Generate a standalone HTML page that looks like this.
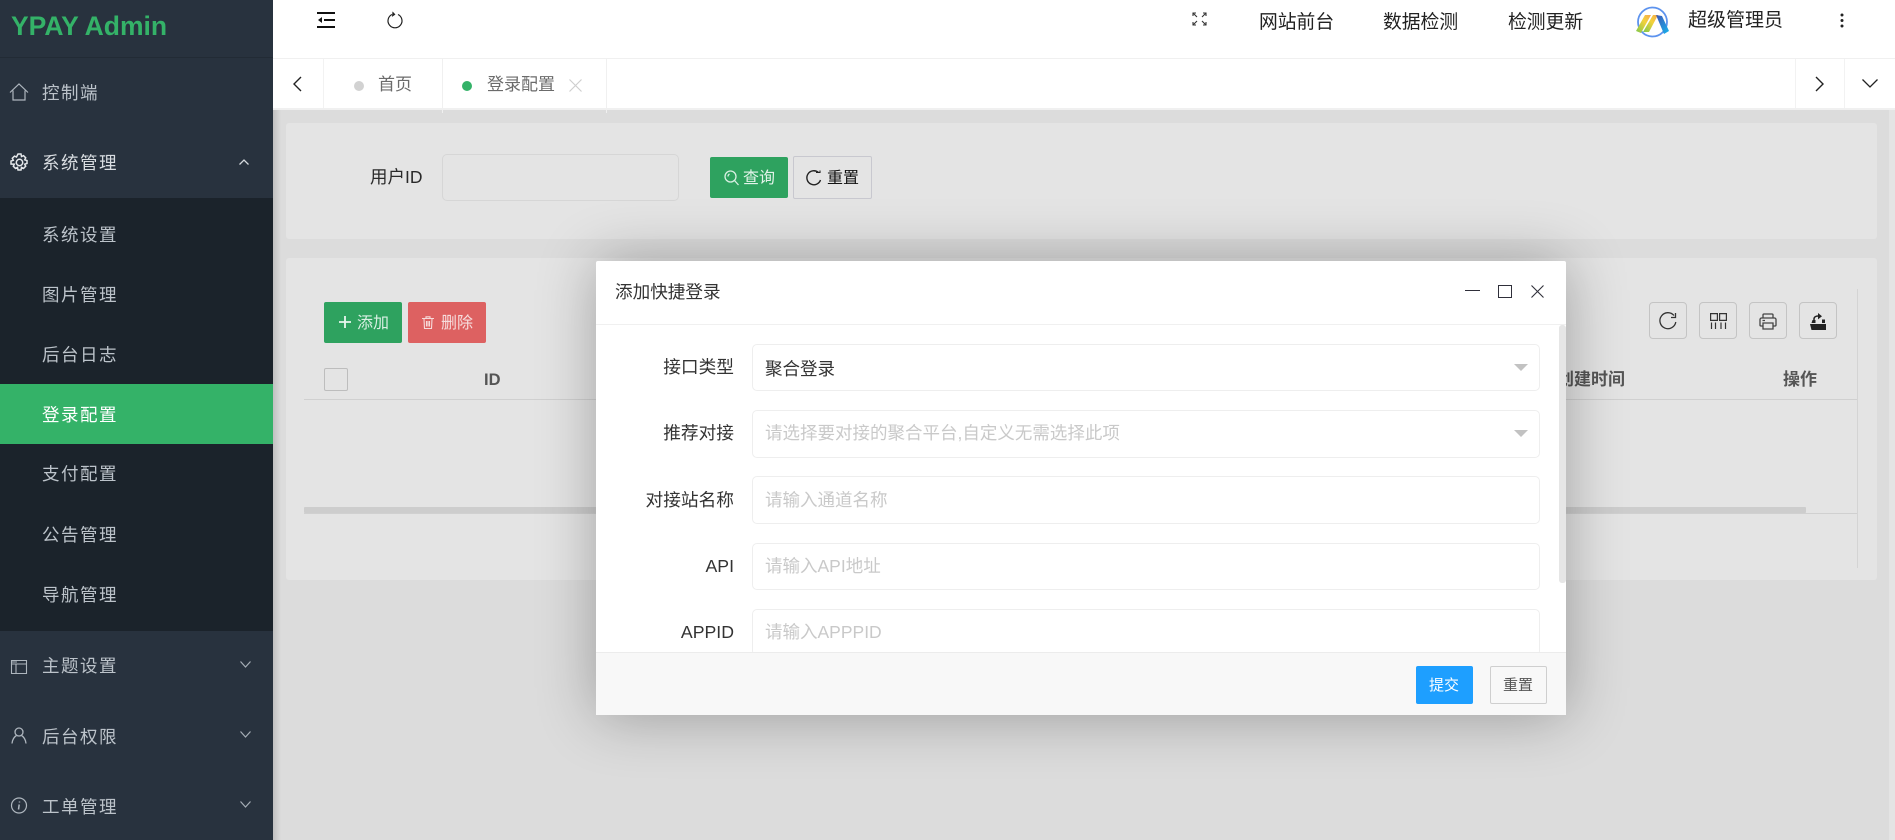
<!DOCTYPE html>
<html lang="zh-CN"><head><meta charset="utf-8"><title>YPAY Admin</title>
<style>
*{box-sizing:border-box;margin:0;padding:0}
html,body{width:1895px;height:840px;overflow:hidden;background:#dcdcdc;font-family:"Liberation Sans","Noto Sans CJK SC",sans-serif}
.a{position:absolute}
.t{position:absolute;white-space:nowrap;line-height:24px;height:24px}
svg{position:absolute;overflow:visible;fill:none}
.m{color:#bcc3ca;font-size:17.5px;letter-spacing:1.5px;left:42px}
.h{color:#222;font-size:18.8px}
.l{color:#333;font-size:17.7px;right:1161px;text-align:right}
.p{color:#c9c9c9;font-size:17.5px;left:765px}
.i{position:absolute;left:752px;width:788px;background:#fff;border:1px solid #eee;border-radius:5px}
.b{position:absolute;border-radius:2px}
.th{color:#555;font-size:17px;font-weight:700}
.tb{position:absolute;width:38px;height:37px;top:302px;border:1px solid #c4c4c4;border-radius:4px}
.car{position:absolute;left:1514px;width:0;height:0;border-left:7px solid transparent;border-right:7px solid transparent;border-top:7px solid #c2c2c2}
</style></head><body>

<!-- main bg -->
<div class="a" style="left:273px;top:110px;width:1622px;height:730px;background:#dcdcdc"></div>
<div class="a" style="left:1889px;top:110px;width:6px;height:730px;background:#e4e4e4"></div>
<div class="a" style="left:286px;top:123px;width:1591px;height:116px;background:#e4e4e4;border-radius:3px"></div>
<div class="a" style="left:286px;top:258px;width:1591px;height:322px;background:#e4e4e4;border-radius:3px"></div>

<div class="t" style="left:370px;top:165px;color:#2a2a2a;font-size:17.5px">用户ID</div>
<div class="a" style="left:442px;top:154px;width:237px;height:47px;border:1px solid #d6d6d6;border-radius:5px"></div>
<div class="b" style="left:710px;top:157px;width:78px;height:41px;background:#2ea25f"></div>
<svg style="left:723px;top:169px" width="18" height="18" viewBox="0 0 18 18" stroke="#d8efe2" stroke-width="1.3"><circle cx="7.5" cy="7.5" r="5.5"/><path d="M11.5 11.5l4 4.5M5 7.5a3 3 0 0 1 1.5-2.6"/></svg>
<div class="t" style="left:743px;top:167px;color:#e3f3ea;font-size:16px">查询</div>
<div class="b" style="left:793px;top:156px;width:79px;height:43px;border:1px solid #c8c8cf"></div>
<svg style="left:806px;top:169px" width="16" height="18" viewBox="0 0 16 18" stroke="#222" stroke-width="1.4"><path d="M12.500 3.500A7 7 0 1 0 14.500 11"/><path d="M10 3.500h4v-2" stroke-width="1.100"/></svg>
<div class="t" style="left:827px;top:167px;color:#111;font-size:16px">重置</div>

<div class="b" style="left:324px;top:302px;width:78px;height:41px;background:#2ea25f"></div>
<svg style="left:338px;top:315px" width="14" height="14" viewBox="0 0 14 14" stroke="#e8f6ee" stroke-width="1.800"><path d="M7 1v12M1 7h12"/></svg>
<div class="t" style="left:357px;top:312px;color:#d9efe3;font-size:16px">添加</div>
<div class="b" style="left:408px;top:302px;width:78px;height:41px;background:#dd6161"></div>
<svg style="left:422px;top:316px" width="12" height="13" viewBox="0 0 12 13" stroke="#f6dada" stroke-width="1.100"><path d="M0 2.500h12M4 2V.8h4V2M2 3l.5 9.500h7L10 3M4.500 5v5.500M6 5v5.500M7.500 5v5.500"/></svg>
<div class="t" style="left:441px;top:312px;color:#f6dddd;font-size:16px">删除</div>

<div class="a" style="left:324px;top:368px;width:24px;height:23px;border:1px solid #bdbdbd;border-radius:2px"></div>
<div class="t th" style="left:484px;top:368px;font-size:16.5px">ID</div>
<div class="t th" style="left:1557px;top:368px">创建时间</div>
<div class="t th" style="left:1783px;top:368px">操作</div>
<div class="a" style="left:304px;top:399px;width:1553px;height:1px;background:#d0d0d0"></div>
<div class="a" style="left:1857px;top:289px;width:1px;height:279px;background:#d4d4d4"></div>
<div class="a" style="left:304px;top:513px;width:1553px;height:1px;background:#d0d0d0"></div>
<div class="a" style="left:304px;top:507px;width:1502px;height:6px;background:#cdcdcd;border-radius:1px"></div>

<div class="tb" style="left:1649px"></div>
<svg style="left:1658px;top:312px" width="20" height="18" viewBox="0 0 20 18" stroke="#333" stroke-width="1.300"><path d="M16 3.500A8 8 0 1 0 17.800 10"/><path d="M17.500 1v4.500h-4.500"/></svg>
<div class="tb" style="left:1699px"></div>
<svg style="left:1710px;top:313px" width="17" height="17" viewBox="0 0 17 17" stroke="#333" stroke-width="1.200"><path d="M.6.600h6.800v6.800H.6zM9.600.600h6.800v6.800H9.600zM1.500 9.500V16M5.500 9.500V16M11 9.500V16M15.500 9.500V16"/></svg>
<div class="tb" style="left:1749px"></div>
<svg style="left:1759px;top:313px" width="18" height="17" viewBox="0 0 18 17" stroke="#444" stroke-width="1.300"><path d="M4 5V2a1 1 0 0 1 1-1h8a1 1 0 0 1 1 1v3M4 13H2a1 1 0 0 1-1-1V6.500a1.500 1.500 0 0 1 1.500-1.500h13A1.500 1.500 0 0 1 17 6.500V12a1 1 0 0 1-1 1h-2M4 10h10v6H4zM3.500 7.500h2.500"/></svg>
<div class="tb" style="left:1799px"></div>
<svg style="left:1810px;top:313px" width="16" height="17" viewBox="0 0 16 17"><path d="M0 11h16v6H1.500zM1.500 10l1-3h3v3zM12 10V6.500h3V10z" fill="#222"/><path d="M4 8V6c0-2 2-3 4-3h2" stroke="#222" stroke-width="1.500"/><path d="M8 0l4 3.200-4 3.200z" fill="#222"/></svg>

<!-- sidebar -->
<div class="a" style="left:273px;top:0;width:8px;height:840px;background:linear-gradient(90deg,rgba(0,0,0,.13),rgba(0,0,0,0))"></div>
<div class="a" style="left:0;top:0;width:273px;height:840px;background:#28323e"></div>
<div class="a" style="left:0;top:57px;width:273px;height:1px;background:#222b35"></div>
<div class="a" style="left:0;top:198px;width:273px;height:433px;background:#1b232b"></div>
<div class="a" style="left:0;top:384px;width:273px;height:60px;background:#34b268"></div>
<div class="t" style="left:11px;top:13px;color:#34b268;font-size:26.5px;line-height:26px;height:26px;font-weight:700">YPAY Admin</div>

<svg style="left:9px;top:83px" width="20" height="18" viewBox="0 0 20 18" stroke="#aeb6be" stroke-width="1.200"><path d="M1 9.500L10 1l9 8.500M4 7.500V17h12V7.500"/></svg>
<div class="t m" style="top:81px">控制端</div>
<svg style="left:10px;top:153px" width="19" height="19" viewBox="0 0 19 19" stroke="#e6e9ec" stroke-width="1.500"><circle cx="9.500" cy="9.500" r="3.200"/><path d="M8 1h3l.5 2.500 2-.9 2.200 2.200-1 2 2.300.7v3l-2.300.7 1 2-2.200 2.200-2-1-.5 2.600H8l-.5-2.600-2 1-2.200-2.200 1-2L1.000 11V8l2.300-.7-1-2 2.200-2.200 2 .9z"/></svg>
<div class="t m" style="top:151px;color:#d9dde1">系统管理</div>
<svg style="left:239px;top:159px" width="10" height="6" viewBox="0 0 10 6" stroke="#d5d9dd" stroke-width="1.300"><path d="M.5 5.500L5 1l4.500 4.500"/></svg>
<div class="t m" style="top:223px">系统设置</div>
<div class="t m" style="top:283px">图片管理</div>
<div class="t m" style="top:343px">后台日志</div>
<div class="t m" style="top:403px;color:#fff">登录配置</div>
<div class="t m" style="top:462px">支付配置</div>
<div class="t m" style="top:523px">公告管理</div>
<div class="t m" style="top:583px">导航管理</div>
<svg style="left:11px;top:660px" width="16" height="14" viewBox="0 0 16 14" stroke="#aeb6be" stroke-width="1.100"><path d="M.5.500h15v13H.5zM.5 4h15M5 4v9.500M1 2h5" /></svg>
<div class="t m" style="top:654px">主题设置</div>
<svg style="left:240px;top:661px" width="11" height="7" viewBox="0 0 11 7" stroke="#a6aeb6" stroke-width="1.200"><path d="M.5.500L5.500 6l5-5.500"/></svg>
<svg style="left:11px;top:727px" width="16" height="17" viewBox="0 0 16 17" stroke="#aeb6be" stroke-width="1.300"><circle cx="8" cy="5" r="4"/><path d="M1 16.500c.3-4 2.500-7 4.500-8M15 16.500c-.3-4-2.500-7-4.500-8"/></svg>
<div class="t m" style="top:725px">后台权限</div>
<svg style="left:240px;top:731px" width="11" height="7" viewBox="0 0 11 7" stroke="#a6aeb6" stroke-width="1.200"><path d="M.5.500L5.500 6l5-5.500"/></svg>
<svg style="left:11px;top:797px" width="16" height="17" viewBox="0 0 16 17" stroke="#aeb6be" stroke-width="1.200"><circle cx="8" cy="8.500" r="7.500"/><path d="M8.500 4.500v1M8.200 7.500L7.500 12.500" stroke-width="1.500"/></svg>
<div class="t m" style="top:795px">工单管理</div>
<svg style="left:240px;top:801px" width="11" height="7" viewBox="0 0 11 7" stroke="#a6aeb6" stroke-width="1.200"><path d="M.5.500L5.500 6l5-5.500"/></svg>

<!-- top bar -->
<div class="a" style="left:273px;top:0;width:1622px;height:110px;background:#fff"></div>
<div class="a" style="left:273px;top:58px;width:1622px;height:1px;background:#f0f0f0"></div>
<div class="a" style="left:273px;top:108px;width:1622px;height:2px;background:#f0f0f0"></div>
<svg style="left:317px;top:12px" width="18" height="16" viewBox="0 0 18 16"><path d="M0 1h18M0 15h18M7 8h11" stroke="#111" stroke-width="2"/><path d="M1 8l4-3v6z" fill="#111"/></svg>
<svg style="left:386px;top:11px" width="17" height="18" viewBox="0 0 17 18" stroke="#222" stroke-width="1.200"><path d="M6 3.500a7 7 0 1 0 6 0"/><path d="M6.500.8L9 3.500 6 5.500" fill="#222" stroke-width=".6"/></svg>
<svg style="left:1192px;top:12px" width="15" height="14" viewBox="0 0 15 14" stroke="#333" stroke-width="1.100"><path d="M1 1l4 4M14 1l-4 4M1 13l4-4M14 13l-4-4M1 4V1h3M14 4V1h-3M1 10v3h3M14 10v3h-3"/></svg>
<div class="t h" style="left:1259px;top:10px">网站前台</div>
<div class="t h" style="left:1383px;top:10px">数据检测</div>
<div class="t h" style="left:1508px;top:10px">检测更新</div>
<svg style="left:1636px;top:6px" width="33" height="32" viewBox="0 0 33 32">
<defs><linearGradient id="g1" x1="0" y1="1" x2="1" y2="0"><stop offset="0" stop-color="#7cc84a"/><stop offset=".6" stop-color="#f3d23c"/><stop offset="1" stop-color="#f6a94e"/></linearGradient><linearGradient id="g2" x1="0" y1="0" x2="1" y2="1"><stop offset="0" stop-color="#3f55b5"/><stop offset="1" stop-color="#16b4ee"/></linearGradient></defs>
<circle cx="16.500" cy="16" r="14.500" stroke="#5d93ee" stroke-width="1.800"/>
<path d="M9 9l6 0-10 18-5-2z" fill="url(#g1)"/><path d="M17 9l5 0-9 17-6 0z" fill="url(#g1)"/>
<path d="M20 9l6 1 7 15-5 3z" fill="url(#g2)"/>
</svg>
<div class="t h" style="left:1688px;top:9px;font-size:19px">超级管理员</div>
<svg style="left:1840px;top:13px" width="4" height="15" viewBox="0 0 4 15" fill="#222"><circle cx="2" cy="2" r="1.500" fill="#222"/><circle cx="2" cy="7.500" r="1.500" fill="#222"/><circle cx="2" cy="13" r="1.500" fill="#222"/></svg>

<!-- tabs -->
<svg style="left:293px;top:76px" width="9" height="16" viewBox="0 0 9 16" stroke="#222" stroke-width="1.400"><path d="M8 1L1 8l7 7"/></svg>
<div class="a" style="left:323px;top:59px;width:1px;height:49px;background:#f2f2f2"></div>
<div class="a" style="left:442px;top:59px;width:1px;height:54px;background:#f0f0f0"></div>
<div class="a" style="left:606px;top:59px;width:1px;height:54px;background:#f0f0f0"></div>
<div class="a" style="left:354px;top:81px;width:10px;height:10px;border-radius:50%;background:#d2d2d2"></div>
<div class="t" style="left:378px;top:73px;color:#6b6b6b;font-size:17px">首页</div>
<div class="a" style="left:462px;top:81px;width:10px;height:10px;border-radius:50%;background:#34b268"></div>
<div class="t" style="left:487px;top:73px;color:#6b6b6b;font-size:17px">登录配置</div>
<svg style="left:569px;top:79px" width="13" height="13" viewBox="0 0 13 13" stroke="#cfcfcf" stroke-width="1.200"><path d="M.5.500l12 12M12.500.500l-12 12"/></svg>
<div class="a" style="left:1795px;top:59px;width:1px;height:49px;background:#f2f2f2"></div>
<div class="a" style="left:1844px;top:59px;width:1px;height:49px;background:#f2f2f2"></div>
<svg style="left:1815px;top:76px" width="9" height="16" viewBox="0 0 9 16" stroke="#222" stroke-width="1.400"><path d="M1 1l7 7-7 7"/></svg>
<svg style="left:1862px;top:79px" width="16" height="9" viewBox="0 0 16 9" stroke="#222" stroke-width="1.300"><path d="M.5.500L8 8 15.500.5"/></svg>

<!-- dialog -->
<div class="a" style="left:596px;top:261px;width:970px;height:454px;background:#fff;border-radius:2px;box-shadow:1px 1px 60px rgba(0,0,0,.3);overflow:hidden">
</div>
<div class="a" style="left:596px;top:261px;width:970px;height:454px;overflow:hidden">
<div style="position:absolute;left:-596px;top:-261px;width:1895px;height:840px">
<div class="t" style="left:615px;top:280px;color:#333;font-size:17.6px">添加快捷登录</div>
<div class="a" style="left:596px;top:324px;width:970px;height:1px;background:#f0f0f0"></div>
<div class="a" style="left:1465px;top:290px;width:15px;height:1px;background:#2f2f3a"></div>
<div class="a" style="left:1498px;top:285px;width:14px;height:13px;border:1px solid #2f2f3a"></div>
<svg style="left:1531px;top:285px" width="13" height="13" viewBox="0 0 13 13" stroke="#2f2f3a" stroke-width="1.100"><path d="M.5.500l12 12M12.500.500l-12 12"/></svg>
<div class="a" style="left:1559px;top:325px;width:7px;height:258px;background:#e6e6e6;border-radius:3px"></div>

<div class="t l" style="top:355px">接口类型</div>
<div class="i" style="top:344px;height:47px"></div>
<div class="t" style="left:765px;top:357px;color:#333;font-size:17.5px">聚合登录</div>
<div class="car" style="top:364px"></div>
<div class="t l" style="top:421px">推荐对接</div>
<div class="i" style="top:410px;height:48px"></div>
<div class="t p" style="top:421px">请选择要对接的聚合平台,自定义无需选择此项</div>
<div class="car" style="top:430px"></div>
<div class="t l" style="top:488px">对接站名称</div>
<div class="i" style="top:476px;height:48px"></div>
<div class="t p" style="top:488px">请输入通道名称</div>
<div class="t l" style="top:554px">API</div>
<div class="i" style="top:543px;height:47px"></div>
<div class="t p" style="top:554px">请输入API地址</div>
<div class="t l" style="top:620px">APPID</div>
<div class="i" style="top:609px;height:47px"></div>
<div class="t p" style="top:620px">请输入APPPID</div>

<div class="a" style="left:596px;top:652px;width:970px;height:63px;background:#f8f8f8;border-top:1px solid #ececec"></div>
<div class="b" style="left:1416px;top:666px;width:57px;height:38px;background:#1e9fff"></div>
<div class="t" style="left:1429px;top:674px;color:#fff;font-size:15px">提交</div>
<div class="b" style="left:1490px;top:666px;width:57px;height:38px;border:1px solid #cfcfcf"></div>
<div class="t" style="left:1503px;top:674px;color:#555;font-size:15px">重置</div>
</div></div>
</body></html>
